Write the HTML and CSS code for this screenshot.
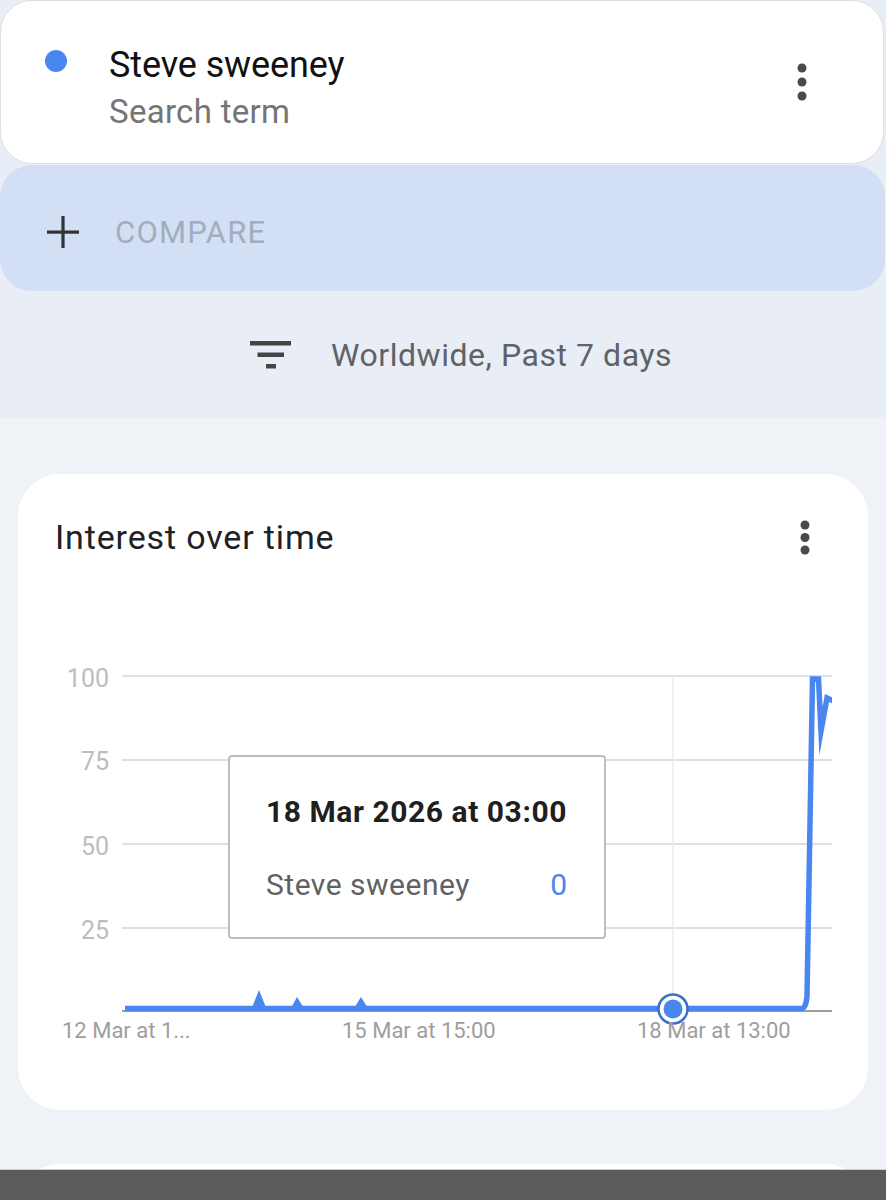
FILE: index.html
```html
<!DOCTYPE html>
<html lang="en">
<head>
<meta charset="utf-8">
<title>Steve sweeney - Google Trends</title>
<link rel="stylesheet" href="styles.css">
</head>
<body>
<header class="top">
  <div class="term-card">
    <span class="term-dot"></span>
    <div class="term-text">
      <div class="term-name">Steve sweeney</div>
      <div class="term-sub">Search term</div>
    </div>
    <svg class="kebab kebab-term" width="10" height="38" viewBox="0 0 10 38" aria-hidden="true">
      <circle cx="5" cy="5" r="4.5"/><circle cx="5" cy="19" r="4.5"/><circle cx="5" cy="33" r="4.5"/>
    </svg>
  </div>
  <div class="compare">
    <svg class="plus" width="32" height="32" viewBox="0 0 32 32" aria-hidden="true">
      <rect x="0" y="14.5" width="32" height="3.2"/><rect x="14.4" y="0" width="3.2" height="32"/>
    </svg>
    <span class="compare-label">COMPARE</span>
  </div>
  <div class="filter">
    <svg class="filter-icon" width="42" height="28" viewBox="0 0 42 28" aria-hidden="true">
      <rect x="0" y="0" width="41" height="4.5"/><rect x="7.5" y="11.5" width="26.5" height="4.5"/><rect x="16" y="23" width="10" height="4.5"/>
    </svg>
    <span class="filter-label">Worldwide, Past 7 days</span>
  </div>
</header>

<main class="content">
  <section class="chart-card">
    <div class="card-head">
      <h2 class="card-title">Interest over time</h2>
      <svg class="kebab kebab-card" width="10" height="35" viewBox="0 0 10 35" aria-hidden="true">
        <circle cx="5" cy="5" r="4.5"/><circle cx="5" cy="17.5" r="4.5"/><circle cx="5" cy="30" r="4.5"/>
      </svg>
    </div>
    <div class="chart">
      <svg class="chart-svg" width="850" height="460" viewBox="18 600 850 460">
        <defs>
          <clipPath id="plot"><rect x="118" y="660" width="714" height="360"/></clipPath>
        </defs>
        <g class="ylabels">
          <text x="109" y="687">100</text>
          <text x="109" y="770">75</text>
          <text x="109" y="855">50</text>
          <text x="109" y="939">25</text>
        </g>
        <g class="grid">
          <line x1="122" y1="676" x2="832" y2="676"/>
          <line x1="122" y1="760" x2="832" y2="760"/>
          <line x1="122" y1="844" x2="832" y2="844"/>
          <line x1="122" y1="928" x2="832" y2="928"/>
        </g>
        <line class="vgrid" x1="673" y1="676" x2="673" y2="1011"/>
        <line class="axis" x1="122" y1="1011" x2="832" y2="1011"/>
        <path class="series" clip-path="url(#plot)" d="M125 1008.5 L802 1008.5 Q806 1008 807 996 L812.5 679 L818.5 679 L821 731 L827 698 L834 701"/>
        <g class="spikes">
          <polygon points="251,1010 259,990 267,1010"/>
          <polygon points="290,1010 297,997 305,1010"/>
          <polygon points="353,1010 361,997 369,1010"/>
        </g>
        <g class="xlabels">
          <text x="62" y="1038">12 Mar at 1...</text>
          <text x="342" y="1038">15 Mar at 15:00</text>
        </g>
        <circle class="marker-ring" cx="673" cy="1009" r="14.5"/>
        <circle class="marker-dot" cx="673" cy="1009" r="9.5"/>
        <text class="xlabels-t" x="637" y="1038">18 Mar at 13:00</text>
      </svg>
      <div class="tooltip">
        <div class="tip-title">18 Mar 2026 at 03:00</div>
        <div class="tip-row"><span class="tip-name">Steve sweeney</span><span class="tip-val">0</span></div>
      </div>
    </div>
  </section>
  <section class="next-card"></section>
</main>

<div class="navbar"></div>
</body>
</html>
```
FILE: styles.css
```css
* { box-sizing: border-box; }
html, body { margin: 0; padding: 0; }
body {
  width: 886px;
  font-family: Roboto, "Noto Sans", "Liberation Sans", sans-serif;
  background: #eff2f7;
  overflow: hidden;
}

/* ---------- top area ---------- */
.top {
  background: #e9eef6;
  height: 418px;
  display: flex;
  flex-direction: column;
}
.term-card {
  height: 164px;
  margin: 0 2px 0 0;
  background: #ffffff;
  border: 1px solid #dcdfe4;
  border-radius: 32px;
  display: flex;
  align-items: flex-start;
  padding: 42px 76px 0 44px;
}
.term-dot {
  width: 22px;
  height: 22px;
  border-radius: 50%;
  background: #4a86f0;
  margin-top: 7px;
  flex: none;
}
.term-text {
  margin-left: 42px;
  display: flex;
  flex-direction: column;
}
.term-name {
  font-size: 36px;
  line-height: 44px;
  color: #111111;
  letter-spacing: -0.1px;
}
.term-sub {
  font-size: 33px;
  line-height: 40px;
  color: #757575;
  margin-top: 5px;
  letter-spacing: 0.3px;
}
.kebab { fill: #4a4a4a; flex: none; margin-left: auto; }
.kebab-term { margin-top: 20px; }

.compare {
  height: 126px;
  margin: 1px 1px 0 0;
  background: #d3dff4;
  border-radius: 32px;
  display: flex;
  align-items: center;
  padding: 8px 0 0 47px;
}
.plus { fill: #333333; flex: none; }
.compare-label {
  margin-left: 36px;
  font-size: 31px;
  color: #a3adbc;
  letter-spacing: 1.2px;
}

.filter {
  flex: 1;
  display: flex;
  align-items: center;
  padding: 0 0 0 250px;
}
.filter-icon { fill: #454545; flex: none; }
.filter-label {
  margin-left: 39px;
  font-size: 32px;
  color: #5f6368;
  letter-spacing: 0.55px;
}

/* ---------- content ---------- */
.content {
  padding: 56px 18px 0;
}
.chart-card {
  height: 636px;
  background: #ffffff;
  border-radius: 42px;
  display: flex;
  flex-direction: column;
}
.card-head {
  display: flex;
  align-items: flex-start;
  padding: 43px 58px 0 37px;
}
.card-title {
  margin: 0;
  font-size: 34px;
  line-height: 40px;
  font-weight: 400;
  color: #202124;
  letter-spacing: 0.85px;
}
.kebab-card { margin-top: 3px; }

.chart {
  position: relative;
  margin-top: 43px;
  height: 460px;
}
.chart-svg { display: block; }
.ylabels text {
  font-family: Roboto, "Liberation Sans", sans-serif;
  font-size: 25px;
  fill: #bdbdbd;
  text-anchor: end;
}
.grid line { stroke: #e0e0e0; stroke-width: 2; }
.vgrid { stroke: #ececec; stroke-width: 1.5; }
.axis { stroke: #9e9e9e; stroke-width: 2; }
.series {
  fill: none;
  stroke: #4a86f0;
  stroke-width: 5.5;
  stroke-linejoin: miter;
  stroke-miterlimit: 10;
}
.spikes polygon { fill: #4a86f0; }
.xlabels text, .xlabels-t {
  font-family: Roboto, "Liberation Sans", sans-serif;
  font-size: 22px;
  fill: #9e9e9e;
}
.marker-ring { fill: #ffffff; stroke: #3c6ec8; stroke-width: 2.5; }
.marker-dot { fill: #4a86f0; }

.tooltip {
  position: absolute;
  left: 210px;
  top: 155px;
  width: 378px;
  height: 184px;
  background: #ffffff;
  border: 2px solid #bdbdbd;
  border-radius: 4px;
  padding: 37px 37px 0 36px;
}
.tip-title {
  font-size: 30px;
  line-height: 36px;
  font-weight: 700;
  color: #1f1f1f;
  letter-spacing: 0.55px;
}
.tip-row {
  margin-top: 37px;
  display: flex;
  justify-content: space-between;
  font-size: 30px;
  line-height: 36px;
}
.tip-name { color: #616161; letter-spacing: 0.5px; }
.tip-val { color: #4a86f0; }

.next-card {
  height: 300px;
  margin-top: 54px;
  background: #ffffff;
  border-radius: 42px;
}

.navbar {
  position: fixed;
  left: 0;
  right: 0;
  bottom: 0;
  height: 30px;
  background: #5b5b5b;
  box-shadow: 0 -1px 0 #cfcfcf;
}
```
